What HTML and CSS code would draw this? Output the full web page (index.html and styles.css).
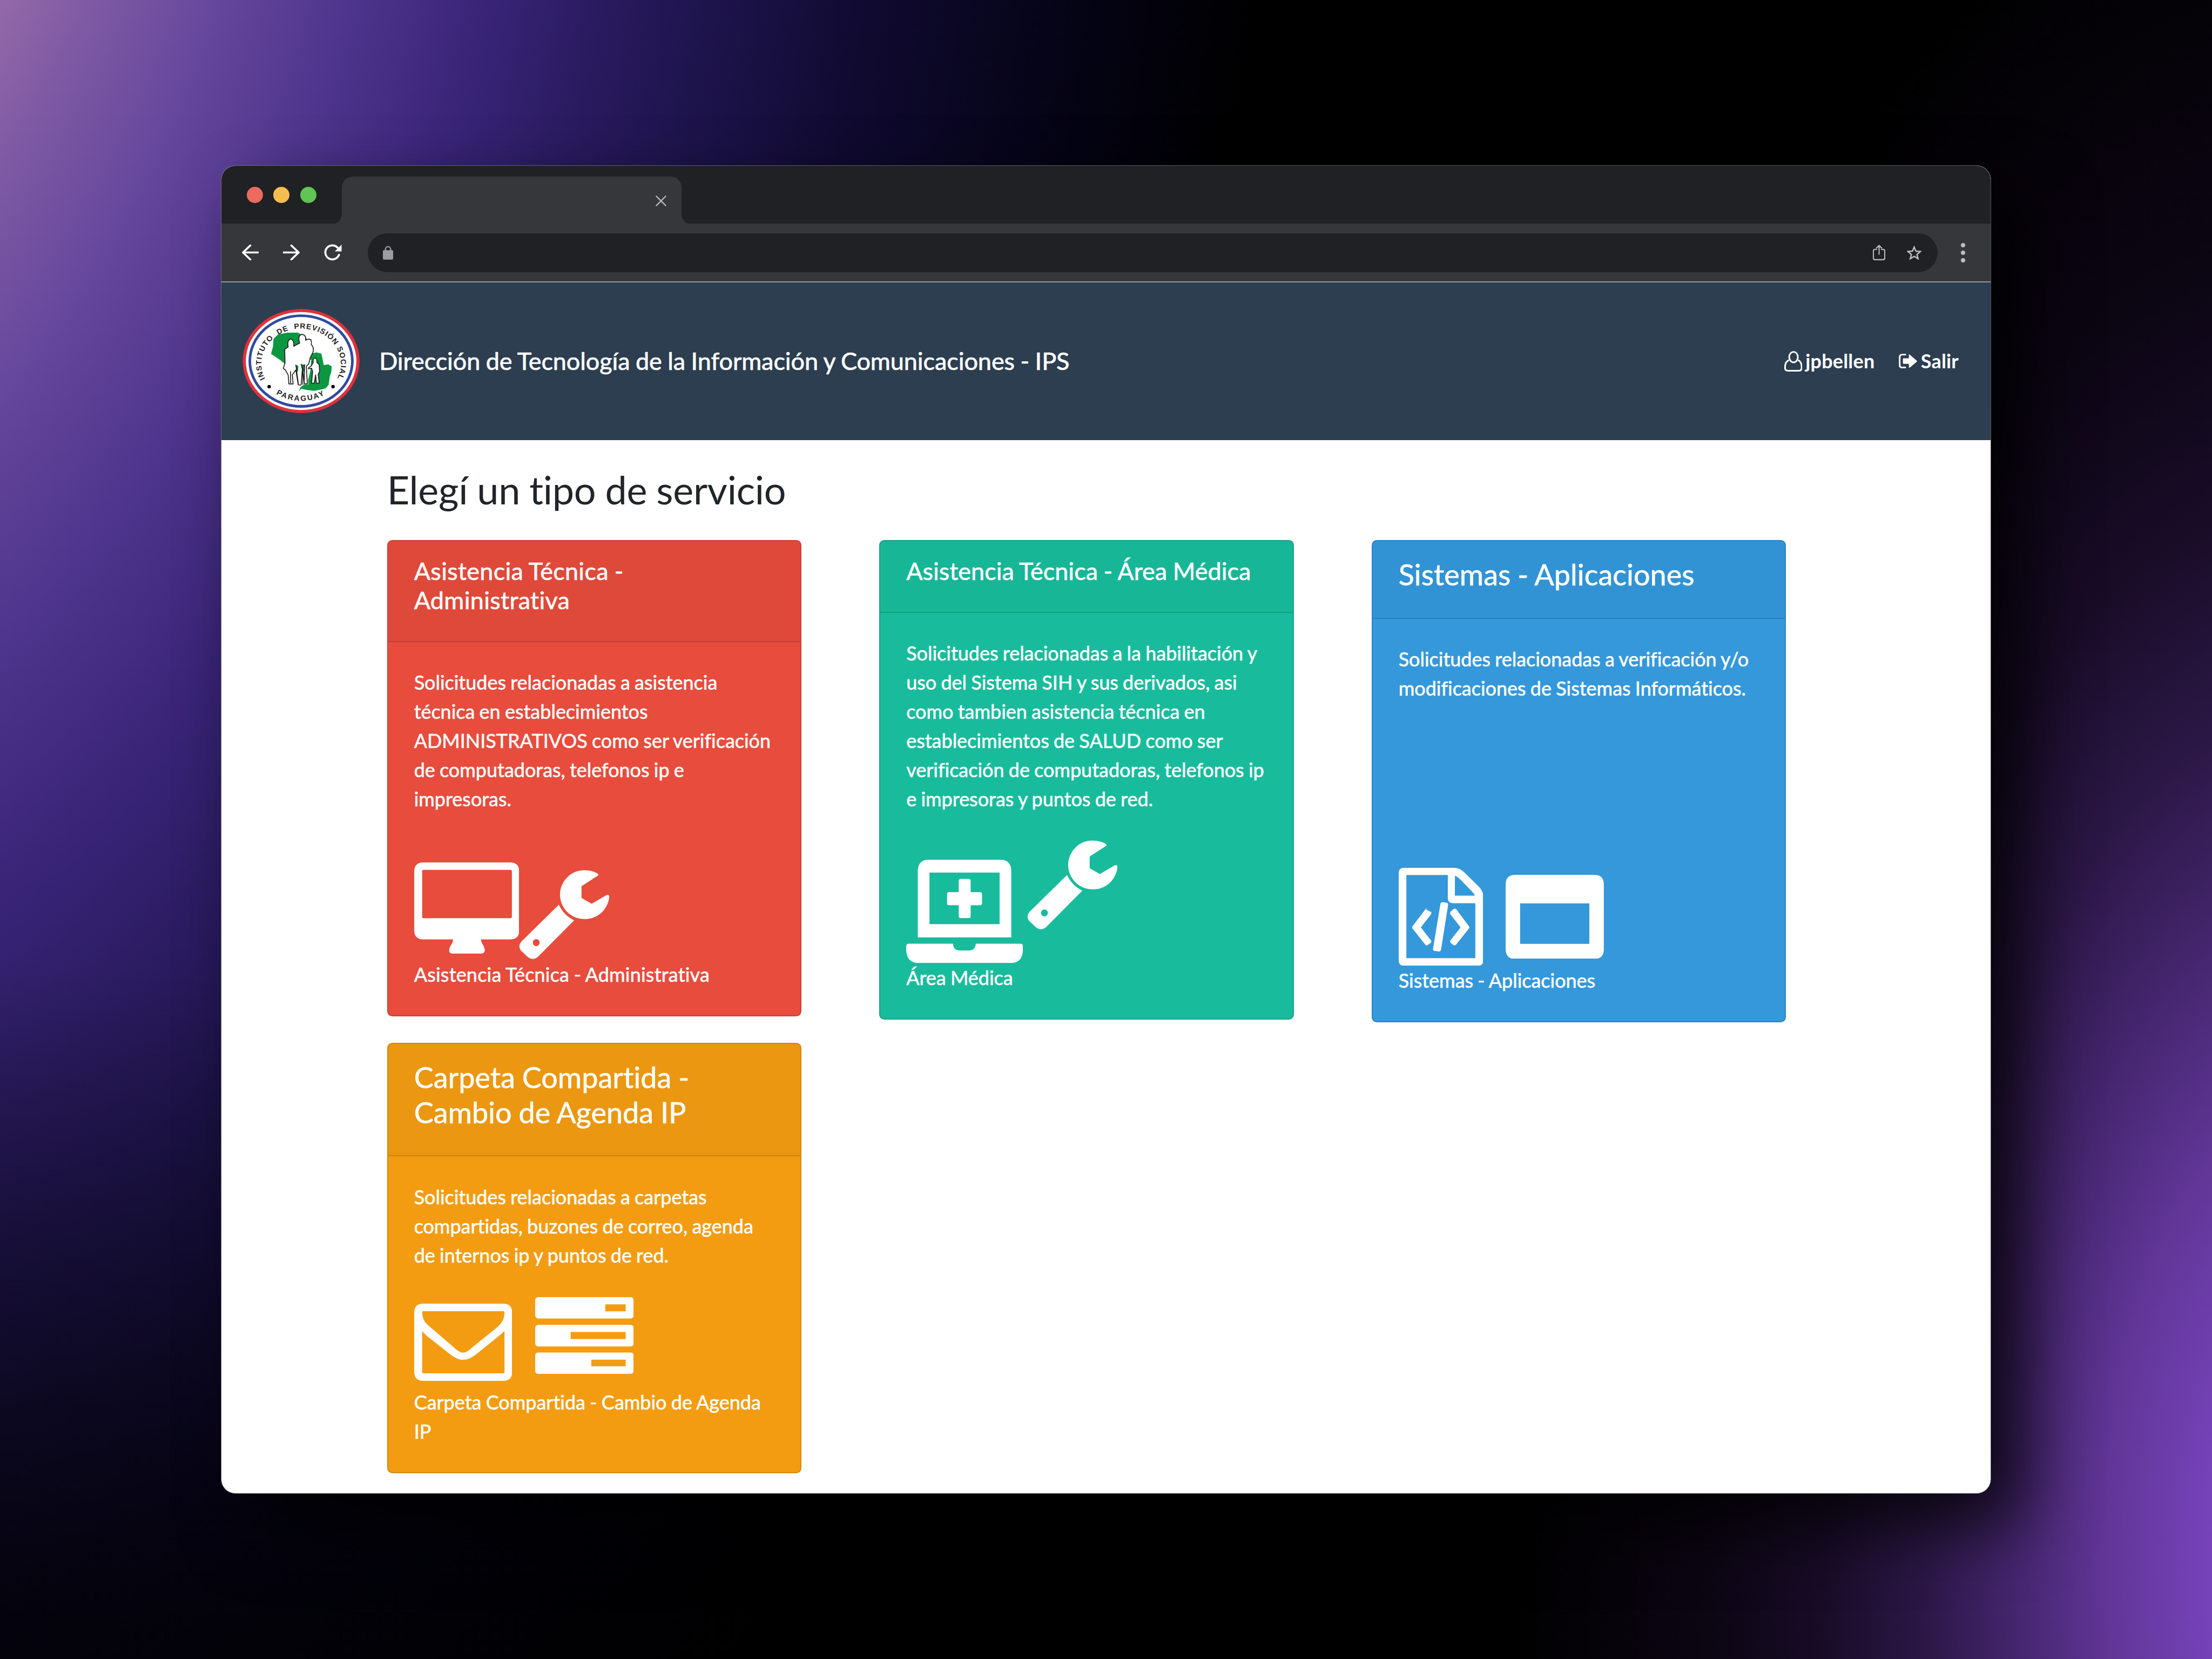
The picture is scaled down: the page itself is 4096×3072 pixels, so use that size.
FILE: index.html
```html
<!DOCTYPE html>
<html lang="es">
<head>
<meta charset="utf-8">
<title>Dirección de Tecnología de la Información y Comunicaciones - IPS</title>
<link rel="stylesheet" href="styles.css">
</head>
<body>
<svg class="defs" aria-hidden="true">
  <symbol id="wrench" viewBox="499 1079 320 282" preserveAspectRatio="none">
    <path d="M779 1096L720 1130V1167L756 1185L808 1158Q819 1154 818 1165C812 1205 775 1234 730 1233C682 1233 644 1198 644 1157C644 1115 682 1080 728 1080Q757 1080 775 1089Q781 1092 779 1096Z"/>
    <path fill-rule="evenodd" d="M640 1188Q658 1222 694 1237L567 1351Q549 1365 531 1353L506 1332Q494 1318 507 1304ZM548 1307a12 11 0 1 0 24 0a12 11 0 1 0 -24 0Z"/>
  </symbol>
</svg>

<div class="window">
  <div class="tabstrip">
    <div class="lights"><i class="light red"></i><i class="light yellow"></i><i class="light green"></i></div>
    <div class="tab">
      <svg class="tab-close" viewBox="0 0 20 20"><path d="M1.5 1.5L18.5 18.5M18.5 1.5L1.5 18.5"/></svg>
    </div>
  </div>

  <div class="toolbar">
    <svg class="nav-btn" viewBox="0 0 32 30"><path d="M31 15H2M16 1.5L2 15L16 28.5"/></svg>
    <svg class="nav-btn forward" viewBox="0 0 32 30"><path d="M1 15H30M16 1.5L30 15L16 28.5"/></svg>
    <svg class="nav-btn reload" viewBox="0 0 34 31"><path d="M28.5 20A13.4 13.4 0 1 1 26 6.5"/><path class="solid" d="M33.5 0.5V13.5H20.5Z"/></svg>
    <div class="address">
      <svg class="lock" viewBox="0 0 20 27"><path class="shackle" d="M5 10V6.5a5 5 0 0 1 10 0V10"/><rect x="0" y="8.6" width="20" height="18.4" rx="2.4"/></svg>
      <svg class="share" viewBox="0 0 24 30"><path d="M7.500 9H4.500Q1 9 1 12.500V25.500Q1 29 4.500 29H19.500Q23 29 23 25.500V12.500Q23 9 19.500 9H16.500M12 18.500V1.500M7 6.500L12 1.500L17 6.500"/></svg>
      <svg class="star" viewBox="0 0 28 27"><path d="M14 2.600L17.300 10.400L26 11.100L19.400 16.700L21.500 25L14 20.500L6.500 25L8.600 16.700L2 11.100L10.700 10.400Z"/></svg>
    </div>
    <div class="menu"><i></i><i></i><i></i></div>
  </div>

  <header class="navbar">
    <svg class="logo" viewBox="68 90 672 598" preserveAspectRatio="none">
      <defs>
        <path id="arc-top" d="M198 490A228 201 0 1 1 610 490"/>
        <path id="arc-bottom" d="M260 578A258 231 0 0 0 548 578"/>
      </defs>
      <ellipse cx="404" cy="389" rx="335" ry="298" fill="#e1303a"/>
      <ellipse cx="404" cy="389" rx="317" ry="281" fill="#fff"/>
      <ellipse cx="404" cy="389" rx="294" ry="260" fill="#fff" stroke="#2f4a9f" stroke-width="15"/>
      <path fill="#0b9741" d="M232 348L243 305L246 262L272 236L325 226L385 226L430 250L470 345L492 339L520 346L526 372L534 412L560 408L580 420L577 450L568 480L562 525L545 545L515 553L480 560L440 555L405 548L392 562L400 540L440 510L450 440L380 480L312 406L280 380Z"/>
      <path fill="#fff" d="M312 404L300 440L326 480L330 524H400L446 524L444 500L458 440L462 380Z"/>
      <path fill="#fff" stroke="#1c1c1c" stroke-width="5" stroke-linejoin="round" d="M330 308Q322 270 344 262Q366 268 362 304L396 286Q382 240 410 236Q434 240 430 270Q438 260 460 266Q466 280 462 294Q480 310 472 338L456 372L448 405L434 420L440 520H424L412 430L404 526H388L374 440L354 468L358 520H334L330 470L314 440L302 432L312 400L310 322Z"/>
      <path fill="#0b7a3a" d="M372 412L388 416L386 452L378 440ZM404 410L424 408L420 452L410 448Z"/>
      <path fill="none" stroke="#1c1c1c" stroke-width="5" d="M344 448V516M374 410L388 520M404 405L414 440V524M424 408L422 500"/>
      <path fill="#fff" stroke="#1c1c1c" stroke-width="5" stroke-linejoin="round" d="M474 396Q468 374 484 372Q498 376 494 396L508 410L510 450L502 465L508 516H492L487 468L480 516H464L470 450L464 430L446 434L448 426L462 418Z"/>
      <circle cx="221" cy="536" r="10"/><circle cx="587" cy="536" r="10"/>
      <text class="logo-text"><textPath href="#arc-top" textLength="850">INSTITUTO&#160; DE&#160; PREVISIÓN SOCIAL</textPath></text>
      <text class="logo-text"><textPath href="#arc-bottom" textLength="290">PARAGUAY</textPath></text>
    </svg>
    <div class="brand">Dirección de Tecnología de la Información y Comunicaciones - IPS</div>
    <a class="nav-link user"><svg viewBox="0 0 100 118" preserveAspectRatio="none"><path d="M27 35a24 30 0 0 1 48 0a24 30 0 0 1 -48 0ZM26 52Q4 60 4 95Q4 113 20 113H80Q96 113 96 95Q96 60 76 52"/></svg><span>jpbellen</span></a>
    <a class="nav-link exit"><svg viewBox="0 0 102 84" preserveAspectRatio="none"><path class="door" d="M40 5H20Q5 5 5 20V64Q5 79 20 79H40"/><path class="arrow" d="M26 26H56V6Q58 2 62 6L100 40Q102 43 100 46L62 79Q58 82 56 78V58H26Q23 58 23 54V30Q23 26 26 26Z"/></svg><span>Salir</span></a>
  </header>

  <main class="container">
    <h2>Elegí un tipo de servicio</h2>
    <div class="grid">
      <article class="card danger">
        <div class="card-header"><h5>Asistencia Técnica - Administrativa</h5></div>
        <div class="card-body">
          <p>Solicitudes relacionadas a asistencia técnica en establecimientos ADMINISTRATIVOS como ser verificación de computadoras, telefonos ip e impresoras.</p>
          <div class="icons">
            <svg class="desktop" viewBox="130 1057 370 284" preserveAspectRatio="none"><path fill-rule="evenodd" d="M162 1057H468Q500 1057 500 1086V1268Q500 1297 468 1297H365Q366 1306 376 1320Q384 1341 366 1341H266Q247 1341 256 1320Q267 1306 267 1297H162Q130 1297 130 1268V1086Q130 1057 162 1057ZM163 1080Q158 1080 158 1085V1226Q158 1231 163 1231H469Q474 1231 474 1226V1085Q474 1080 469 1080Z"/></svg>
            <svg class="wrench"><use href="#wrench"/></svg>
          </div>
          <div class="caption">Asistencia Técnica - Administrativa</div>
        </div>
      </article>

      <article class="card success">
        <div class="card-header"><h5>Asistencia Técnica - Área Médica</h5></div>
        <div class="card-body">
          <p>Solicitudes relacionadas a la habilitación y uso del Sistema SIH y sus derivados, asi como tambien asistencia técnica en establecimientos de SALUD como ser verificación de computadoras, telefonos ip e impresoras y puntos de red.</p>
          <div class="icons">
            <svg class="laptop" viewBox="131 1048 411 322" preserveAspectRatio="none"><path fill-rule="evenodd" d="M172 1290V1084Q172 1048 210 1048H463Q501 1048 501 1084V1290ZM213 1088V1249H460V1088Z"/><path d="M323 1108H351Q358 1108 358 1114V1149H391Q398 1149 398 1155V1184Q398 1190 391 1190H358V1224Q358 1230 351 1230H323Q316 1230 316 1224V1190H282Q275 1190 275 1184V1155Q275 1149 282 1149H316V1114Q316 1108 323 1108ZM140 1310H296Q297 1331 320 1331H352Q375 1331 376 1310H533Q542 1310 542 1318V1330Q540 1370 500 1370H175Q133 1370 131 1330V1318Q131 1310 140 1310Z"/></svg>
            <svg class="wrench"><use href="#wrench"/></svg>
          </div>
          <div class="caption">Área Médica</div>
        </div>
      </article>

      <article class="card info">
        <div class="card-header"><h4>Sistemas - Aplicaciones</h4></div>
        <div class="card-body">
          <p>Solicitudes relacionadas a verificación y/o modificaciones de Sistemas Informáticos.</p>
          <div class="icons">
            <svg class="file-code" viewBox="129 1052 298 299" preserveAspectRatio="none"><path fill-rule="evenodd" d="M147 1052H325Q342 1052 358 1064L412 1110Q427 1124 427 1140V1335Q427 1351 409 1351H147Q129 1351 129 1335V1068Q129 1052 147 1052ZM156 1074V1328H399V1160H320Q302 1160 302 1144V1074ZM327 1076V1137H397Q394 1130 388 1125L344 1086Q336 1079 327 1076Z"/><path d="M222 1178L243 1187Q246 1190 243 1194L207 1234L243 1274Q246 1278 242 1281L231 1288Q226 1291 222 1286L177 1237Q175 1234 177 1231L222 1180Q226 1174 231 1178ZM331 1178Q326 1175 322 1178L312 1186Q308 1190 311 1194L347 1234L311 1274Q308 1278 312 1281L322 1288Q327 1291 331 1287L377 1237Q379 1234 377 1231ZM283 1157L299 1159Q304 1161 303 1166L278 1303Q276 1308 271 1308L254 1306Q249 1304 250 1299L276 1162Q278 1157 283 1157Z"/></svg>
            <svg class="app-window" viewBox="507 1073 346 257" preserveAspectRatio="none"><path fill-rule="evenodd" d="M540 1073H820Q853 1073 853 1103V1300Q853 1330 820 1330H540Q507 1330 507 1300V1103Q507 1073 540 1073ZM558 1160V1284H802V1160Z"/></svg>
          </div>
          <div class="caption">Sistemas - Aplicaciones</div>
        </div>
      </article>

      <article class="card warning">
        <div class="card-header"><h4>Carpeta Compartida - Cambio de Agenda IP</h4></div>
        <div class="card-body">
          <p>Solicitudes relacionadas a carpetas compartidas, buzones de correo, agenda de internos ip y puntos de red.</p>
          <div class="icons">
            <svg class="envelope" viewBox="131 905 345 257" preserveAspectRatio="none"><path fill-rule="evenodd" d="M163 905H444Q476 905 476 935V1132Q476 1162 444 1162H163Q131 1162 131 1132V935Q131 905 163 905ZM163 930Q159 930 159 935Q159 960 180 977L270 1050Q290 1068 303 1068Q317 1068 336 1050L428 980Q449 960 449 935Q449 930 444 930ZM159 996V1132Q159 1137 164 1137H444Q449 1137 449 1132V996Q440 1005 430 1012L350 1073Q325 1092 303 1092Q281 1092 257 1073L175 1012Q166 1005 159 996Z"/></svg>
            <svg class="tasks" viewBox="558 883 347 255" preserveAspectRatio="none"><path fill-rule="evenodd" d="M570 883H893Q905 883 905 893V943Q905 954 893 954H570Q558 954 558 943V893Q558 883 570 883ZM805 907V930H877V907ZM570 975H893Q905 975 905 985V1036Q905 1047 893 1047H570Q558 1047 558 1036V985Q558 975 570 975ZM683 999V1022H877V999ZM570 1067H893Q905 1067 905 1077V1128Q905 1138 893 1138H570Q558 1138 558 1128V1077Q558 1067 570 1067ZM756 1091V1113H877V1091Z"/></svg>
          </div>
          <div class="caption">Carpeta Compartida - Cambio de Agenda IP</div>
        </div>
      </article>
    </div>
  </main>
</div>
</body>
</html>
```
FILE: styles.css
```css
/* 1rem = ten pixels of the web page shown inside the browser window */
html { font-size: 23.988px; }
* { box-sizing: border-box; }

body {
  margin: 0;
  width: 4096px;
  height: 3072px;
  overflow: hidden;
  display: flex;
  align-items: center;
  justify-content: center;
  font-family: Lato, "Liberation Sans", sans-serif;
  font-variant-ligatures: none;
  word-spacing: -.04em;
  background:
    radial-gradient(ellipse 1551px 3335px at 4289px 2878px,
      rgb(120, 68, 188) 12%, rgba(118, 66, 184, .82) 25%, rgba(112, 62, 180, .61) 36%,
      rgba(108, 58, 174, .4) 47%, rgba(104, 52, 166, .23) 59%, rgba(100, 45, 160, .12) 72%, transparent 96%),
    linear-gradient(to bottom, transparent 58%, rgba(0, 0, 0, .75) 98%),
    radial-gradient(ellipse 2973px 5619px at -582px -1164px,
      #9369a8 28.500%, #805ba4 32.500%, #65479c 39.100%, #4f358d 46.100%, #3a2579 53.500%,
      #291a5e 61%, #1f154f 66.100%, #100a30 76.500%, #060418 87.300%, #000 100%);
}

.defs { position: absolute; width: 0; height: 0; }

.window {
  width: 3276px;
  height: 2458px;
  display: flex;
  flex-direction: column;
  background: #fff;
  border-radius: 26px;
  overflow: hidden;
  box-shadow: 0 0 0 1px rgba(130, 130, 138, .65), 60px 60px 130px rgba(0, 0, 0, .8);
}

/* Browser chrome */
.tabstrip {
  flex: none;
  height: 107px;
  display: flex;
  background: #202124;
}
.lights { width: 223px; padding: 39px 0 0 47px; display: flex; gap: 19.4px; }
.light { width: 30px; height: 30px; border-radius: 50%; }
.red { background: #ed6a5e; }
.yellow { background: #f4bd4f; }
.green { background: #61c454; }
.tab {
  position: relative;
  width: 629px;
  margin-top: 20px;
  padding: 35px 28px 0 0;
  display: flex;
  justify-content: flex-end;
  background: #36373a;
  border-radius: 20px 20px 0 0;
}
.tab::before, .tab::after {
  content: "";
  position: absolute;
  bottom: 0;
  width: 14px;
  height: 18px;
}
.tab::before { right: 100%; background: radial-gradient(ellipse at 0 0, transparent 69%, #36373a 71%); }
.tab::after { left: 100%; background: radial-gradient(ellipse at 100% 0, transparent 69%, #36373a 71%); }
.tab-close { width: 20px; height: 20px; fill: none; stroke: #bdbdc0; stroke-width: 2.4; stroke-linecap: round; }

.toolbar {
  flex: none;
  height: 109px;
  padding-left: 38px;
  display: flex;
  align-items: center;
  background: #36373a;
  border-bottom: 2px solid #96979a;
}
.nav-btn { width: 31px; height: 29px; fill: none; stroke: #fff; stroke-width: 3.8; stroke-linecap: round; stroke-linejoin: round; }
.forward { margin-left: 45px; }
.reload { width: 33px; height: 31px; margin-left: 45px; }
.nav-btn .solid { fill: #fff; stroke: none; }
.address {
  width: 2907px;
  height: 72px;
  margin-left: 48px;
  padding: 0 30px 0 28px;
  display: flex;
  align-items: center;
  background: #202124;
  border-radius: 36px;
}
.address svg { fill: none; stroke: #bdbdc0; stroke-width: 2.2; stroke-linecap: round; stroke-linejoin: round; }
.address .lock { width: 19px; height: 26px; fill: #9a9da1; stroke: none; }
.address .shackle { fill: none; stroke: #9a9da1; stroke-width: 2.4; }
.share { width: 23px; height: 29px; margin-left: auto; }
.address .star { width: 27px; height: 26px; margin-left: 40px; stroke-width: 2.6; stroke-linejoin: miter; }
.menu { margin-left: 43px; display: flex; flex-direction: column; gap: 6px; }
.menu i { width: 8px; height: 8px; border-radius: 50%; background: #bdbdc0; }

/* Site header */
.navbar {
  flex: none;
  height: 12.17rem;
  padding: 0 2.46rem 0 1.63rem;
  display: flex;
  align-items: center;
  background: #2c3e50;
  color: #fff;
}
.logo { width: 9.05rem; height: 8.05rem; }
.logo-text { font: bold 43px "Liberation Sans", Arial, sans-serif; fill: #222; word-spacing: 0; }
.brand { margin-left: 1.5rem; font-size: 1.875rem; line-height: 1.5; letter-spacing: -.06px; white-space: nowrap; -webkit-text-stroke: .7px #fff; }
.nav-link { display: flex; align-items: center; font-size: 1.5rem; font-weight: 700; line-height: 1.5; letter-spacing: .2px; }
.nav-link svg { fill: none; stroke: #fff; }
.user { margin-left: auto; }
.user svg { width: 1.4rem; height: 1.59rem; margin-right: .24rem; stroke-width: 9; }
.exit { margin-left: 1.84rem; }
.exit svg { width: 1.42rem; height: 1.13rem; margin-right: .3rem; }
.exit .door { stroke-width: 9; }
.exit .arrow { fill: #fff; stroke: none; }

/* Page content */
.container { width: 114rem; margin: 0 auto; padding: 2.02rem 1.5rem 0; }
h2, h4, h5, p { margin: 0; font-weight: 400; }
h2 { margin-bottom: 2.1rem; font-size: 3rem; line-height: 1.2; letter-spacing: -.28px; color: #212529; }
.grid { display: grid; grid-template-columns: repeat(3, 32rem); gap: 1.6rem 6rem; align-items: start; }

.card { border: .1rem solid rgba(0, 0, 0, .125); border-radius: .4rem; color: #fff; overflow: hidden; -webkit-text-stroke: .6px #fff; }
.danger { background-color: #e74c3c; }
.success { background-color: #18bc9c; }
.info { background-color: #3498db; }
.warning { background-color: #f39c12; }
.card-header { padding: 1.2rem 2rem; background: rgba(0, 0, 0, .03); border-bottom: .1rem solid rgba(0, 0, 0, .125); }
h4, h5 { margin-bottom: .8rem; line-height: 1.2; }
h4 { font-size: 2.25rem; }
h5 { font-size: 1.875rem; }
.danger h5 { letter-spacing: .3px; }
.card-body { padding: 2rem; font-size: 1.5rem; line-height: 1.5; }
.danger .card-body, .warning .card-body { padding-top: 2.03rem; }
.card-body p, .caption { width: 27.8rem; }
.danger .caption { letter-spacing: .22px; }

.icons { display: flex; align-items: flex-start; }
.icons svg { fill: #fff; flex: none; }
.danger .icons { height: 11.3rem; }
.success .icons { height: 11.57rem; }
.info .icons { height: 20.32rem; }
.warning .icons { height: 9.07rem; }
.desktop { width: 8.11rem; height: 7.03rem; margin-top: 3.75rem; }
.wrench { width: 6.99rem; height: 6.93rem; }
.danger .wrench { margin-top: 4.32rem; }
.success .wrench { margin: 2.06rem 0 0 .33rem; }
.laptop { width: 9.01rem; height: 7.97rem; margin-top: 3.55rem; }
.file-code { width: 6.53rem; height: 7.55rem; margin-top: 12.74rem; }
.app-window { width: 7.58rem; height: 6.49rem; margin: 13.27rem 0 0 1.75rem; }
.envelope { width: 7.56rem; height: 5.96rem; margin-top: 2.6rem; }
.tasks { width: 7.6rem; height: 5.92rem; margin: 2.09rem 0 0 1.8rem; }
```
